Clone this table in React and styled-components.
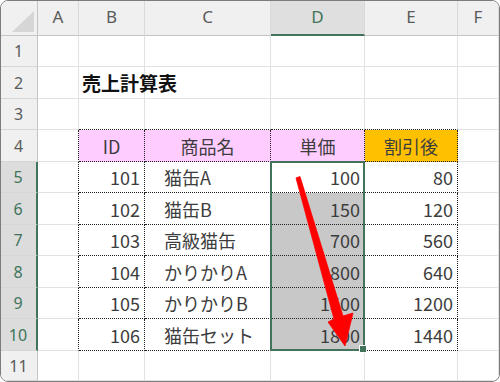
import React from "react";
import styled, { createGlobalStyle, css } from "styled-components";

const GlobalStyle = createGlobalStyle`
  html, body {
    margin: 0;
    padding: 0;
    background: #ffffff;
  }
  * {
    box-sizing: border-box;
  }
`;

const GREEN = "#41745a";
const COLS = ["A", "B", "C", "D", "E", "F"];
const ROW_HEIGHTS = [31, 32, 31, 32, 31, 32, 31, 32, 31, 32, 30];

// B4:E10
const table = [
  { id: "ID", name: "商品名", price: "単価", sale: "割引後", head: true },
  { id: 101, name: "猫缶A", price: 100, sale: 80 },
  { id: 102, name: "猫缶B", price: 150, sale: 120 },
  { id: 103, name: "高級猫缶", price: 700, sale: 560 },
  { id: 104, name: "かりかりA", price: 800, sale: 640 },
  { id: 105, name: "かりかりB", price: 1500, sale: 1200 },
  { id: 106, name: "猫缶セット", price: 1800, sale: 1440 },
];

// every grid child sits on its own row / column line
const place = css`
  grid-row: ${(p) => p.$r};
  grid-column: ${(p) => p.$c};
`;

const Frame = styled.div`
  position: relative;
  width: 500px;
  height: 382px;
  border: 1px solid #7c7c7c;
  border-radius: 8px;
  overflow: hidden;
  background: #fff;
`;

const Sheet = styled.div`
  display: grid;
  grid-template-columns: 37px 41px 66px 126px 94px 93px 41px;
  grid-template-rows: 35px ${ROW_HEIGHTS.map((h) => h + "px").join(" ")};
  font-family: "Noto Sans CJK JP", "Noto Sans", sans-serif;
`;

const Corner = styled.div`
  ${place}
  position: relative;
  background: #f0f0f0;
  border-right: 1px solid #c4c4c4;
  border-bottom: 1px solid #c4c4c4;
  svg {
    position: absolute;
    right: 3px;
    bottom: 3px;
  }
`;

const ColHead = styled.div`
  ${place}
  display: flex;
  align-items: center;
  justify-content: center;
  padding-bottom: 3px;
  background: ${(p) => (p.$active ? "#dfdfdf" : "#f0f0f0")};
  color: ${(p) => (p.$active ? GREEN : "#5a5a5a")};
  border-right: 1px solid #dadada;
  border-bottom: ${(p) => (p.$active ? `2px solid ${GREEN}` : "1px solid #c4c4c4")};
  font-family: "Noto Sans", sans-serif;
  font-size: 17px;
`;

const RowHead = styled.div`
  ${place}
  display: flex;
  align-items: center;
  justify-content: center;
  padding-right: 1px;
  background: ${(p) => (p.$active ? "#dcdcdc" : "#f0f0f0")};
  color: ${(p) => (p.$active ? GREEN : "#5a5a5a")};
  border-right: ${(p) => (p.$active ? `2px solid ${GREEN}` : "1px solid #c4c4c4")};
  border-bottom: 1px solid #d6d6d6;
  font-family: "Noto Sans", sans-serif;
  font-size: 16px;
`;

const Cell = styled.div`
  ${place}
  display: flex;
  align-items: center;
  overflow: visible;
  white-space: nowrap;
  font-size: 18px;
  color: #3d3d3d;
  background: ${(p) => p.$bg || "transparent"};
  border-right: ${(p) => (p.$dotR ? "1px dotted #222" : "1px solid #e2e2e2")};
  border-bottom: ${(p) => (p.$dotB ? "1px dotted #222" : "1px solid #e2e2e2")};
  ${(p) =>
    p.$align === "right" &&
    css`
      justify-content: flex-end;
      padding-right: 4px;
    `}
  ${(p) =>
    p.$align === "center" &&
    css`
      justify-content: center;
    `}
  ${(p) =>
    p.$align === "indent" &&
    css`
      padding-left: 19px;
    `}
`;

const Title = styled.span`
  padding-left: 3px;
  font-size: 19px;
  font-weight: 700;
  color: #111;
`;

const Selection = styled.div`
  position: relative;
  grid-column: 5;
  grid-row: 6 / 12;
  margin: -1px 0 0 -1px;
  border: 2px solid ${GREEN};
  pointer-events: none;
  &::after {
    content: "";
    position: absolute;
    right: -4px;
    bottom: -4px;
    width: 6px;
    height: 6px;
    background: ${GREEN};
    border: 1px solid #fff;
  }
`;

const Arrow = styled.svg`
  position: absolute;
  left: 0;
  top: 0;
  pointer-events: none;
`;

function tableCell(r, c) {
  // r is the sheet row (1-based), c the column index (A = 0)
  const row = table[r - 4];
  const key = ["id", "name", "price", "sale"][c - 1];
  let bg;
  if (row.head) bg = c === 4 ? "#ffc000" : "#ffccff";
  else if (c === 3 && r >= 6) bg = "#c8c8c8";
  let align = "right";
  if (row.head) align = "center";
  else if (c === 2) align = "indent";
  return (
    <Cell key={`${r}-${c}`} $r={r + 1} $c={c + 2} $bg={bg} $align={align} $dotR $dotB>
      {row[key]}
    </Cell>
  );
}

export default function App() {
  const cells = [];
  cells.push(
    <Corner key="corner" $r={1} $c={1}>
      <svg width="22" height="21" viewBox="0 0 22 21">
        <polygon points="22,0 22,21 0,21" fill="#d6d6d6" />
      </svg>
    </Corner>
  );
  COLS.forEach((c, i) =>
    cells.push(
      <ColHead key={c} $r={1} $c={i + 2} $active={c === "D"}>
        {c}
      </ColHead>
    )
  );

  for (let r = 1; r <= 11; r++) {
    cells.push(
      <RowHead key={`h${r}`} $r={r + 1} $c={1} $active={r >= 5 && r <= 10}>
        {r}
      </RowHead>
    );
    for (let c = 0; c < 6; c++) {
      if (r >= 4 && r <= 10 && c >= 1 && c <= 4) {
        cells.push(tableCell(r, c));
        continue;
      }
      const dotR = c === 0 && r >= 4 && r <= 10;
      const dotB = r === 3 && c >= 1 && c <= 4;
      cells.push(
        <Cell key={`${r}-${c}`} $r={r + 1} $c={c + 2} $dotR={dotR} $dotB={dotB}>
          {r === 2 && c === 1 && <Title>売上計算表</Title>}
        </Cell>
      );
    }
  }

  return (
    <>
      <GlobalStyle />
      <Frame>
        <Sheet>
          {cells}
          <Selection />
        </Sheet>
        <Arrow width="500" height="382" viewBox="0 0 500 382">
          {/* tapered shaft widening into the head */}
          <polygon
            points="295,177 299,175.5 342,315 352,312 344,345 327,321 333,318"
            fill="#ff0000"
            stroke="#ff0000"
            strokeWidth="0.8"
            strokeLinejoin="round"
          />
        </Arrow>
      </Frame>
    </>
  );
}
